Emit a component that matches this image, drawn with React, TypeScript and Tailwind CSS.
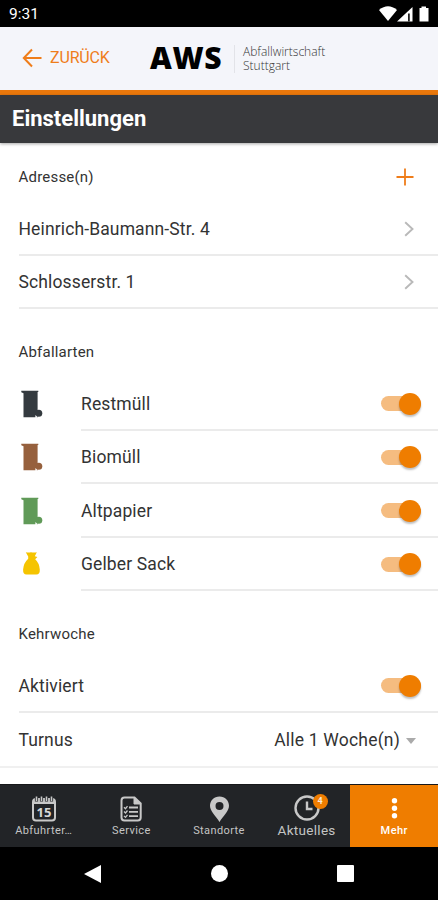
import React, { useState } from "react";

interface WasteType {
  id: number;
  name: string;
  icon: React.ReactNode;
}

function BinIcon({ color }: { color: string }) {
  return (
    <svg width="24" height="30" viewBox="0 0 24 30" fill={color}>
      <path d="M2.300 1.800H19.300V3H18.600V28.300H4.500V4.200L2.300 3.200Z" />
      <circle cx="19.800" cy="24.300" r="3.500" />
      <path d="M16.400 28.300V26L18.200 27.800L17.600 29H16.400Z" fill="#fff" />
    </svg>
  );
}

function SackIcon() {
  return (
    <svg width="24" height="30" viewBox="0 0 24 30" fill="#f5c400">
      <path d="M6.800 3.200Q9 3.800 12 3.200Q15 3.800 17.800 3.200L15.800 7.200L18.400 8L16.200 10.200Q20.400 14 20.800 20.500Q21 25.600 17.400 25.600H7.400Q3.900 25.600 4.100 20.500Q4.600 14 9.200 9.800V7.600Z" />
    </svg>
  );
}

const addresses = ["Heinrich-Baumann-Str. 4", "Schlosserstr. 1"];

const wasteTypes: WasteType[] = [
  { id: 1, name: "Restmüll", icon: <BinIcon color="#343a3f" /> },
  { id: 2, name: "Biomüll", icon: <BinIcon color="#96603d" /> },
  { id: 3, name: "Altpapier", icon: <BinIcon color="#609a58" /> },
  { id: 4, name: "Gelber Sack", icon: <SackIcon /> },
];

function Toggle({ label }: { label: string }) {
  const [on, setOn] = useState(true);
  return (
    <button
      role="switch"
      aria-checked={on}
      aria-label={label}
      onClick={() => setOn(!on)}
      className={`flex h-[15px] w-10 items-center rounded-full ${on ? "justify-end bg-[#f5bc80]" : "justify-start bg-gray-300"}`}
    >
      <span className={`h-[22px] w-[22px] rounded-full shadow-[0_2px_2px_rgba(0,0,0,0.25)] ${on ? "bg-[#ef7d00]" : "bg-white"}`} />
    </button>
  );
}

function Chevron() {
  return (
    <svg width="10" height="16" viewBox="0 0 10 16" fill="none" stroke="#b9b9b9" strokeWidth="1.900">
      <path d="M1.200 1.300L8.500 8L1.200 14.700" />
    </svg>
  );
}

function StatusBar() {
  return (
    <div className="flex h-[27px] items-center justify-between bg-black pr-2 pl-[9px] text-white">
      <span className="text-[15.5px] leading-5">9:31</span>
      <svg width="51" height="16" viewBox="0 0 51 16" fill="#fff">
        <path d="M0 4Q9-3.500 18 4L9 15Z" />
        <path d="M18 15.500L33.500 1V15.500Z" />
        <path d="M29 7.500H30.800V15.500H29Z" fill="#222" />
        <path d="M42.500 2V.500H47V2H49.500V15.500H40.500V2Z" />
      </svg>
    </div>
  );
}

function Header() {
  return (
    <header className="flex h-[68px] items-center border-b-[5px] border-[#ea780c] bg-[#f4f5fa]">
      <button className="ml-[22px] flex w-[128px] items-center pb-px text-[#ef7d1a]">
        <svg width="20" height="20" viewBox="0 0 20 20" fill="none" stroke="currentColor" strokeWidth="2">
          <path d="M19.500 10H2M10 1.500L1.800 10L10 18.500" />
        </svg>
        <span className="ml-2 text-base tracking-[-0.15px]">ZURÜCK</span>
      </button>
      <span className="w-[84px] pb-0.5 font-['Open_Sans'] text-[30px] leading-none font-extrabold tracking-[0.6px] text-black">AWS</span>
      <div className="flex flex-col border-l border-[#e2e3e8] pl-2 font-['Open_Sans'] text-[12px] leading-[14px] font-light text-[#333]">
        <span>Abfallwirtschaft</span>
        <span>Stuttgart</span>
      </div>
    </header>
  );
}

function NavItem({ label, icon, active, large }: { label: string; icon: React.ReactNode; active?: boolean; large?: boolean }) {
  return (
    <button className={`flex flex-1 flex-col items-center pt-[9px] ${active ? "bg-[#ef7d00] font-medium text-white" : "bg-[#222427] text-[#c4c4c4]"}`}>
      {icon}
      <span className={`h-4 leading-[13px] whitespace-nowrap ${large ? "text-[13.5px] tracking-[0.3px]" : "text-[11px] tracking-[0.4px]"}`}>{label}</span>
    </button>
  );
}

function BottomNav() {
  return (
    <nav className="flex h-[63px] shrink-0 border-t border-[#17181a] bg-[#222427]">
      <NavItem
        label="Abfuhrter…"
        icon={
          <svg width="30" height="30" viewBox="0 0 30 30" fill="none">
            <rect x="4" y="5" width="22" height="21.500" rx="3" stroke="#c8c8c8" strokeWidth="2" />
            <path d="M4 5H26V10H4Z" fill="#c8c8c8" />
            <path d="M7.500 3V7.500M12.500 3V7.500M17.500 3V7.500M22.500 3V7.500" stroke="#222427" strokeWidth="3.200" />
            <path d="M7.500 2.500V7M12.500 2.500V7M17.500 2.500V7M22.500 2.500V7" stroke="#c8c8c8" strokeWidth="1.600" />
            <text x="15" y="23.300" fill="#d6d6d6" fontSize="13" fontWeight="700" textAnchor="middle" fontFamily="Open Sans, sans-serif">15</text>
          </svg>
        }
      />
      <NavItem
        label="Service"
        icon={
          <svg width="30" height="30" viewBox="0 0 30 30" fill="none" stroke="#c8c8c8" strokeWidth="2">
            <path d="M8.500 3.500H18.500L24.700 9.500V23.500Q24.700 26.500 21.700 26.500H8.500Q5.500 26.500 5.500 23.500V6.500Q5.500 3.500 8.500 3.500Z" />
            <path d="M18 4V10H24.500Z" fill="#c8c8c8" strokeWidth="1" />
            <path d="M13 13.500H22M13 17.800H22M13 22.200H22" strokeWidth="1.800" />
            <path d="M8 13.200L9.500 14.700L11.500 12.200M8 17.500L9.500 19L11.500 16.500M8 21.900L9.500 23.400L11.500 20.900" strokeWidth="1.300" />
          </svg>
        }
      />
      <NavItem
        label="Standorte"
        icon={
          <svg width="30" height="30" viewBox="0 0 30 30" fill="#c8c8c8" fillRule="evenodd">
            <path d="M15.500 2.500C10 2.500 6 6.700 6 11.800C6 17.500 12 22 15.500 28C19 22 25 17.500 25 11.800C25 6.700 21 2.500 15.500 2.500ZM15.500 8A4 4 0 1 1 15.500 16A4 4 0 1 1 15.500 8Z" />
          </svg>
        }
      />
      <NavItem
        label="Aktuelles"
        large
        icon={
          <div className="relative">
            <svg width="30" height="30" viewBox="0 0 30 30" fill="none" stroke="#c8c8c8">
              <circle cx="15" cy="14" r="11.500" strokeWidth="2.400" />
              <path d="M15 7.500V15H20.500" strokeWidth="2.400" />
            </svg>
            <span className="absolute top-0 left-[21px] flex h-[15px] w-[15px] items-center justify-center rounded-full bg-[#ef7d00] text-[9px] font-bold text-[#fbe9d5]">
              4
            </span>
          </div>
        }
      />
      <NavItem
        label="Mehr"
        active
        icon={
          <svg width="30" height="30" viewBox="0 0 30 30" fill="#fff">
            <circle cx="15.500" cy="6.700" r="2.700" />
            <circle cx="15.500" cy="14.200" r="2.700" />
            <circle cx="15.500" cy="21.700" r="2.700" />
          </svg>
        }
      />
    </nav>
  );
}

export default function App() {
  return (
    <div className="flex h-[900px] w-[438px] flex-col overflow-hidden bg-white font-[Roboto,sans-serif] text-[17.5px] text-[#333]">
      <StatusBar />
      <Header />
      <h1 className="z-10 flex h-12 items-center bg-[#38393c] pb-0.5 pl-3 text-[22px] font-bold text-white shadow-[0_1px_3px_rgba(0,0,0,0.35)]">
        Einstellungen
      </h1>

      <main className="flex-1 bg-white">
        {/* Addresses */}
        <div className="flex h-[59px] items-center justify-between pt-[9px] pr-6 pl-[18.5px]">
          <h2 className="text-[15px] tracking-[0.2px]">Adresse(n)</h2>
          <svg width="18" height="18" viewBox="0 0 18 18" stroke="#ef7d1a" strokeWidth="1.800">
            <path d="M9 .500V17.500M.500 9H17.500" />
          </svg>
        </div>
        {addresses.map((address) => (
          <div key={address} className="ml-[18.5px] flex h-[53.5px] items-center justify-between border-b-2 border-[#ebebeb] pt-0.5 pr-6">
            <span className="tracking-[0.13px]">{address}</span>
            <Chevron />
          </div>
        ))}

        {/* Waste types */}
        <h2 className="h-[68px] pt-8 pl-[18.5px] text-[15px] leading-[22px] tracking-[0.2px]">Abfallarten</h2>
        {wasteTypes.map((type) => (
          <div key={type.id} className="flex h-[53.5px] items-center pl-[19px]">
            {type.icon}
            <div className="ml-[38px] flex h-full flex-1 items-center justify-between border-b-2 border-[#ebebeb] pt-0.5 pr-[17px]">
              <span className="tracking-[0.13px]">{type.name}</span>
              <Toggle label={type.name} />
            </div>
          </div>
        ))}

        {/* Sweeping week */}
        <h2 className="h-[68px] pt-8 pl-[18.5px] text-[15px] leading-[22px] tracking-[0.2px]">Kehrwoche</h2>
        <div className="ml-[18.5px] flex h-[53.5px] items-center justify-between border-b-2 border-[#ebebeb] pt-0.5 pr-[17px]">
          <span className="tracking-[0.13px]">Aktiviert</span>
          <Toggle label="Aktiviert" />
        </div>
        <div className="flex h-[55px] items-center justify-between border-b-2 border-[#f0f0f0] pt-[3px] pr-[22px] pl-[18.5px]">
          <span className="tracking-[0.13px]">Turnus</span>
          <div className="flex items-center gap-[6px] tracking-[0.2px]">
            Alle 1 Woche(n)
            <svg width="10" height="6" viewBox="0 0 10 6" fill="#aaa">
              <path d="M0 0H10L5 6Z" />
            </svg>
          </div>
        </div>
      </main>

      <BottomNav />

      {/* Android buttons */}
      <div className="flex h-[53px] shrink-0 items-center justify-between bg-black pr-[84px] pl-[84px]">
        <svg width="17" height="18" viewBox="0 0 17 18" fill="#fff">
          <path d="M0 9L17 0V18Z" />
        </svg>
        <div className="h-[17px] w-[17px] rounded-full bg-white" />
        <div className="h-[17px] w-[17px] rounded-[1px] bg-white" />
      </div>
    </div>
  );
}
